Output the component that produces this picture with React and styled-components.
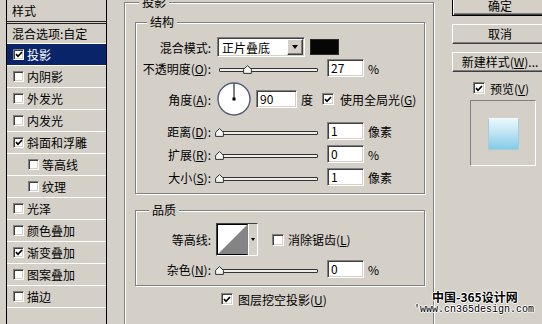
import React from "react";
import styled, { createGlobalStyle, css } from "styled-components";

const FACE = "#d4d0c8";

const GlobalStyle = createGlobalStyle`
  html, body {
    margin: 0;
    padding: 0;
    background: ${FACE};
    overflow: hidden;
  }
  body {
    font-family: "Noto Sans CJK SC", "Noto Sans", "DejaVu Sans", sans-serif;
    font-size: 12px;
    color: #000;
  }
  u {
    text-underline-offset: 1px;
  }
`;

const sunken = css`
  box-sizing: border-box;
  border: 1px solid;
  border-color: #808080 #ffffff #ffffff #808080;
  box-shadow: inset 1px 1px 0 #404040, inset -1px -1px 0 ${FACE};
`;

const raised = css`
  box-sizing: border-box;
  border: 1px solid;
  border-color: #ffffff #404040 #404040 #ffffff;
  box-shadow: inset -1px -1px 0 #808080, inset 1px 1px 0 ${FACE};
  background: ${FACE};
`;

const Window = styled.div`
  position: relative;
  display: flex;
  align-items: flex-start;
  width: 542px;
  height: 324px;
  overflow: hidden;
  background: ${FACE};
`;

/* ---------- left style list ---------- */

const Sidebar = styled.div`
  flex: 0 0 108px;
  align-self: stretch;
  box-sizing: border-box;
  padding-left: 6px;
`;

const StyleList = styled.div`
  width: 101px;
  height: 100%;
  box-sizing: border-box;
  border-left: 1px solid #000;
  border-right: 1px solid #000;
`;

const ListHeader = styled.div`
  height: 21px;
  line-height: 21px;
  padding-left: 5px;
  border-bottom: 3px double #222;
`;

const BlendRow = styled.div`
  box-sizing: border-box;
  height: 20px;
  line-height: 19px;
  padding-left: 5px;
  border-bottom: 1px solid #fff;
`;

const StyleRow = styled.div`
  box-sizing: border-box;
  display: flex;
  align-items: center;
  gap: 3px;
  height: 22px;
  padding-left: ${(p) => (p.$indent ? 21 : 6)}px;
  border-bottom: 1px solid #fff;
  background: ${(p) => (p.$selected ? "#0a246a" : "transparent")};
  color: ${(p) => (p.$selected ? "#fff" : "#000")};
`;

const Box = styled.span`
  ${sunken};
  flex: none;
  display: flex;
  align-items: center;
  justify-content: center;
  width: ${(p) => p.$size || 12}px;
  height: ${(p) => p.$size || 12}px;
  margin-left: ${(p) => p.$ml || 0}px;
  background: #fff;
`;

const Check = ({ on, size, ml }) => (
  <Box $size={size} $ml={ml}>
    {on && (
      <svg width="8" height="7" viewBox="0 0 8 7">
        <path d="M1 3.2 L3 5.3 L7 1" fill="none" stroke="#000" strokeWidth="1.7" />
      </svg>
    )}
  </Box>
);

/* ---------- main panel ---------- */

const Main = styled.div`
  flex: 0 0 326px;
  box-sizing: border-box;
  padding: 2px 0 0 16px;
`;

const Group = styled.div`
  box-sizing: border-box;
  display: flex;
  flex-direction: column;
  border: 1px solid #808080;
  box-shadow: 1px 1px 0 #fff, inset 1px 1px 0 #fff;
`;

const OuterGroup = styled(Group)`
  width: 310px;
  height: 345px;
`;

const InnerGroup = styled(Group)`
  width: 290px;
  margin: ${(p) => p.$mt}px 0 0 10px;
  padding-bottom: 7px;
`;

const Legend = styled.div`
  align-self: flex-start;
  height: 14px;
  line-height: 14px;
  margin: -8px 0 0 ${(p) => p.$left}px;
  padding: 0 3px;
  background: ${FACE};
`;

const Row = styled.div`
  display: flex;
  align-items: center;
  height: ${(p) => p.$h}px;
  margin-top: ${(p) => p.$mt}px;
  margin-left: ${(p) => p.$ml || 0}px;
  white-space: nowrap;
`;

const Label = styled.span`
  flex: none;
  width: 75px;
  text-align: right;
`;

const Text = styled.span`
  flex: none;
  margin-left: ${(p) => p.$ml || 0}px;
`;

const Select = styled.div`
  ${sunken};
  display: flex;
  align-items: center;
  justify-content: space-between;
  width: 88px;
  height: 20px;
  margin-left: 6px;
  padding: 0 1px 0 4px;
  background: #fff;
`;

const DropButton = styled.span`
  ${raised};
  display: flex;
  align-items: center;
  justify-content: center;
  width: 16px;
  height: 16px;
`;

const Arrow = styled.span`
  width: 0;
  height: 0;
  border-left: 3.5px solid transparent;
  border-right: 3.5px solid transparent;
  border-top: 4px solid #000;
`;

const Swatch = styled.span`
  flex: none;
  width: 29px;
  height: 16px;
  margin-left: 5px;
  background: #060606;
  box-shadow: inset 0 0 0 1px #2a2a2a;
`;

const SliderBox = styled.div`
  position: relative;
  flex: none;
  align-self: stretch;
  width: 99px;
  margin-left: 8px;
`;

const Track = styled.div`
  box-sizing: border-box;
  height: 4px;
  margin-top: 9px;
  border: 1px solid #333;
  border-radius: 1px;
  background: #eeeeea;
`;

const Thumb = styled.svg`
  position: absolute;
  top: 6px;
`;

const Field = styled.div`
  ${sunken};
  flex: none;
  width: ${(p) => p.$w}px;
  height: 18px;
  margin-left: ${(p) => p.$ml}px;
  padding-left: 3px;
  line-height: 16px;
  background: #fff;
`;

const Dial = styled.svg`
  flex: none;
  margin-left: 6px;
`;

const ContourPicker = styled.div`
  flex: none;
  display: flex;
  box-sizing: border-box;
  width: 42px;
  height: 33px;
  margin-left: 5px;
  border: 1px solid;
  border-color: #404040 #fff #fff #404040;
  background: ${FACE};
`;

const ContourCurve = styled.svg`
  flex: none;
  border: 1px solid #000;
  border-right-color: #808080;
`;

const ContourDrop = styled.span`
  flex: 1;
  display: flex;
  align-items: center;
  justify-content: center;
  border-left: 1px solid #fff;
`;

const SmallArrow = styled(Arrow)`
  border-left-width: 2.5px;
  border-right-width: 2.5px;
  border-top-width: 3px;
`;

const Slider = ({ value }) => (
  <SliderBox>
    <Track />
    <Thumb width="9" height="9" viewBox="0 0 9 9" style={{ left: -4 + value * 99 }}>
      <path d="M4.5 0.6 L8.4 4.3 L8.4 8.4 L0.6 8.4 L0.6 4.3 Z" fill="#f4f4f0" stroke="#333" strokeWidth="1" />
    </Thumb>
  </SliderBox>
);

/* ---------- right column ---------- */

const Side = styled.div`
  flex: none;
  display: flex;
  flex-direction: column;
  align-items: flex-start;
  width: 108px;
  margin-top: -4px;
  padding-left: 18px;
`;

const Button = styled.div`
  ${raised};
  width: 96px;
  height: 20px;
  margin-top: ${(p) => p.$mt || 0}px;
  line-height: 18px;
  text-align: center;
  white-space: nowrap;
  ${(p) =>
    p.$default &&
    css`
      border-color: #000;
      box-shadow: inset 1px 1px 0 #fff, inset -1px -1px 0 #404040, inset -2px -2px 0 #808080;
    `}
`;

const PreviewToggle = styled.div`
  display: flex;
  align-items: center;
  gap: 5px;
  height: 12px;
  margin: 10px 0 0 21px;
`;

const PreviewBox = styled.div`
  box-sizing: border-box;
  display: flex;
  align-items: center;
  justify-content: center;
  width: 66px;
  height: 66px;
  margin: 6px 0 0 18px;
  border: 1px solid;
  border-color: #808080 #fff #fff #808080;
`;

const PreviewSwatch = styled.div`
  box-sizing: border-box;
  width: 31px;
  height: 32px;
  margin-top: 2px;
  border: 1px solid #a9cbd8;
  border-top-color: #f4fbfd;
  background: linear-gradient(#eaf7fb, #bfe5f3 45%, #84cce9);
`;

/* ---------- watermark overlay ---------- */

const Mark = styled.div`
  position: absolute;
  left: ${(p) => p.$x}px;
  top: ${(p) => p.$y}px;
  white-space: nowrap;
  text-shadow: 1px 0 #fff, -1px 0 #fff, 0 1px #fff, 0 -1px #fff;
`;

const MarkTitle = styled(Mark)`
  font-size: 12px;
  font-weight: 700;
  line-height: 14px;
`;

const MarkUrl = styled(Mark)`
  font-family: "Liberation Mono", "DejaVu Sans Mono", monospace;
  font-size: 10px;
  line-height: 12px;
`;

const styles = [
  { name: "投影", on: true, selected: true },
  { name: "内阴影" },
  { name: "外发光" },
  { name: "内发光" },
  { name: "斜面和浮雕", on: true },
  { name: "等高线", indent: true },
  { name: "纹理", indent: true },
  { name: "光泽" },
  { name: "颜色叠加" },
  { name: "渐变叠加", on: true },
  { name: "图案叠加" },
  { name: "描边" },
];

const sliders = [
  { label: "距离", key: "D", value: 0, text: "1", unit: "像素", mt: 6 },
  { label: "扩展", key: "R", value: 0, text: "0", unit: "%", mt: 5 },
  { label: "大小", key: "S", value: 0, text: "1", unit: "像素", mt: 5 },
];

const App = () => (
  <>
    <GlobalStyle />
    <Window>
      <Sidebar>
        <StyleList>
          <ListHeader>样式</ListHeader>
          <BlendRow>混合选项:自定</BlendRow>
          {styles.map((s) => (
            <StyleRow key={s.name} $selected={s.selected} $indent={s.indent}>
              <Check on={s.on} size={11} />
              <span>{s.name}</span>
            </StyleRow>
          ))}
        </StyleList>
      </Sidebar>

      <Main>
        <OuterGroup>
          <Legend $left={14}>投影</Legend>

          <InnerGroup $mt={13}>
            <Legend $left={11}>结构</Legend>
            <Row $h={20} $mt={8}>
              <Label>混合模式:</Label>
              <Select>
                <span>正片叠底</span>
                <DropButton>
                  <Arrow />
                </DropButton>
              </Select>
              <Swatch />
            </Row>
            <Row $h={18} $mt={2}>
              <Label>
                不透明度(<u>O</u>):
              </Label>
              <Slider value={0.28} />
              <Field $w={37} $ml={9}>27</Field>
              <Text $ml={4}>%</Text>
            </Row>
            <Row $h={34} $mt={5}>
              <Label>
                角度(<u>A</u>):
              </Label>
              <Dial width="34" height="34" viewBox="0 0 34 34">
                <circle cx="17" cy="17" r="16" fill="#fff" stroke="#4e5c7c" strokeWidth="1.4" />
                <line x1="17" y1="17" x2="17" y2="1.5" stroke="#000" strokeWidth="1" />
                <rect x="15.5" y="15.5" width="3" height="3" fill="#000" />
              </Dial>
              <Field $w={41} $ml={5}>90</Field>
              <Text $ml={4}>度</Text>
              <Check on ml={9} />
              <Text $ml={6}>
                使用全局光(<u>G</u>)
              </Text>
            </Row>
            {sliders.map((s) => (
              <Row key={s.key} $h={18} $mt={s.mt}>
                <Label>
                  {s.label}(<u>{s.key}</u>):
                </Label>
                <Slider value={s.value} />
                <Field $w={37} $ml={9}>{s.text}</Field>
                <Text $ml={4}>{s.unit}</Text>
              </Row>
            ))}
          </InnerGroup>

          <InnerGroup $mt={16}>
            <Legend $left={13}>品质</Legend>
            <Row $h={33} $mt={6}>
              <Label>等高线:</Label>
              <ContourPicker>
                <ContourCurve width="29" height="29" viewBox="0 0 29 29">
                  <rect width="29" height="29" fill="#fff" />
                  <polygon points="0,29 29,0 29,29" fill="#848484" />
                </ContourCurve>
                <ContourDrop>
                  <SmallArrow />
                </ContourDrop>
              </ContourPicker>
              <Check ml={14} />
              <Text $ml={4}>
                消除锯齿(<u>L</u>)
              </Text>
            </Row>
            <Row $h={18} $mt={4}>
              <Label>
                杂色(<u>N</u>):
              </Label>
              <Slider value={0} />
              <Field $w={37} $ml={9}>0</Field>
              <Text $ml={4}>%</Text>
            </Row>
          </InnerGroup>

          <Row $h={12} $mt={7} $ml={96}>
            <Check on />
            <Text $ml={5}>
              图层挖空投影(<u>U</u>)
            </Text>
          </Row>
        </OuterGroup>
      </Main>

      <Side>
        <Button $default>确定</Button>
        <Button $mt={8}>取消</Button>
        <Button $mt={8}>
          新建样式(<u>W</u>)...
        </Button>
        <PreviewToggle>
          <Check on />
          <span>
            预览(<u>V</u>)
          </span>
        </PreviewToggle>
        <PreviewBox>
          <PreviewSwatch />
        </PreviewBox>
      </Side>

      <MarkTitle $x={432} $y={290}>中国-365设计网</MarkTitle>
      <MarkUrl $x={414} $y={304}>'www.cn365design.com</MarkUrl>
    </Window>
  </>
);

export default App;
